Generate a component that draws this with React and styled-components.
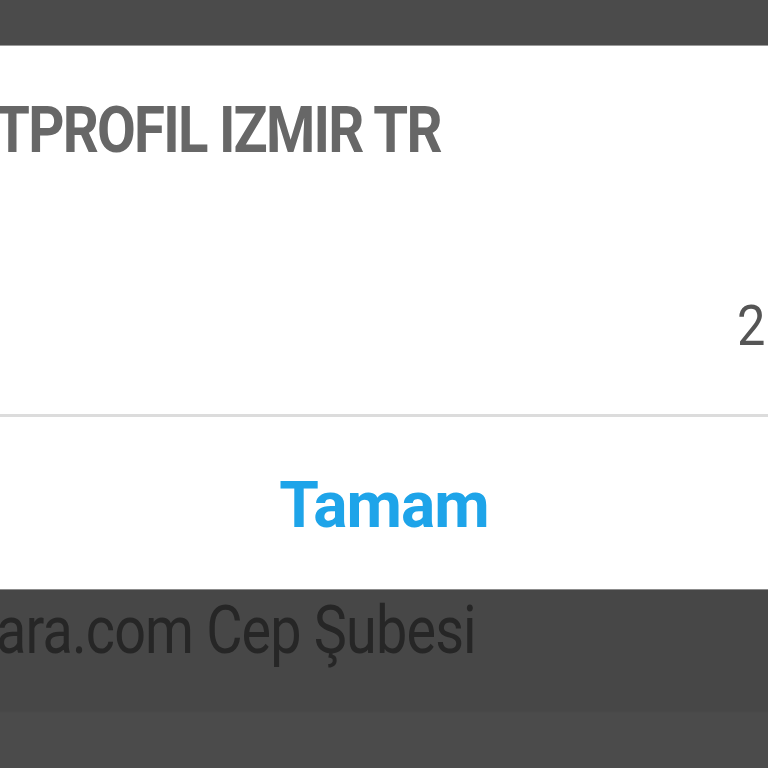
import React from "react";
import styled, { createGlobalStyle } from "styled-components";

const Global = createGlobalStyle`
  html, body {
    margin: 0;
    padding: 0;
    background: #4a4a4a;
  }
  body {
    font-family: Roboto, "Liberation Sans", sans-serif;
  }
`;

const Screen = styled.div`
  width: 768px;
  height: 768px;
  overflow: hidden;
  display: flex;
  flex-direction: column;
  background: #4a4a4a;
`;

const TopBar = styled.div`
  height: 45px;
  flex: none;
  background: #4b4b4b;
  border-bottom: 1px solid #9a9a9a;
`;

const Dialog = styled.div`
  height: 543px;
  flex: none;
  background: #fff;
  display: flex;
  flex-direction: column;
  border-bottom: 1px solid #8c8c8c;
`;

// DIN-style condensed caps
const Title = styled.h1`
  margin: 53px 0 0 -5px;
  font-family: Roboto, "Liberation Sans", sans-serif;
  font-weight: 700;
  font-size: 64px;
  line-height: 64px;
  letter-spacing: -2px;
  color: #676767;
  white-space: nowrap;
  transform: scaleX(0.88);
  transform-origin: left center;
`;

const ValueRow = styled.div`
  margin-top: 136px;
  display: flex;
  justify-content: flex-end;
  margin-right: 0;
`;

const Value = styled.span`
  font-family: Roboto, "Liberation Sans", sans-serif;
  font-weight: 400;
  font-size: 55px;
  line-height: 55px;
  color: #555;
  transform: scaleX(0.92);
  transform-origin: left center;
`;

const Divider = styled.hr`
  margin: 60px 0 0;
  border: none;
  height: 3px;
  background: #dcdcdc;
`;

const ButtonRow = styled.div`
  flex: 1;
  display: flex;
  align-items: center;
  justify-content: center;
`;

const OkButton = styled.button`
  border: none;
  background: none;
  padding: 0;
  margin: 6px 0 0 0;
  font-family: Roboto, "Liberation Sans", sans-serif;
  font-weight: 700;
  font-size: 64px;
  line-height: 64px;
  letter-spacing: -1px;
  color: #1ea4e9;
`;

const Bottom = styled.div`
  flex: 1;
  background: linear-gradient(#474747 0, #474747 121px, #4b4b4b 123px);
`;

const BranchName = styled.div`
  margin: 8px 0 0 -4px;
  font-family: Roboto, "Liberation Sans", sans-serif;
  font-weight: 400;
  font-size: 66px;
  line-height: 66px;
  letter-spacing: -1px;
  color: #262626;
  white-space: nowrap;
  transform: scaleX(0.845);
  transform-origin: left center;
`;

export default function App() {
  return (
    <Screen>
      <Global />
      <TopBar />
      <Dialog>
        <Title>TPROFIL IZMIR TR</Title>
        <ValueRow>
          <Value>2</Value>
        </ValueRow>
        <Divider />
        <ButtonRow>
          <OkButton>Tamam</OkButton>
        </ButtonRow>
      </Dialog>
      <Bottom>
        <BranchName>ara.com Cep Şubesi</BranchName>
      </Bottom>
    </Screen>
  );
}
